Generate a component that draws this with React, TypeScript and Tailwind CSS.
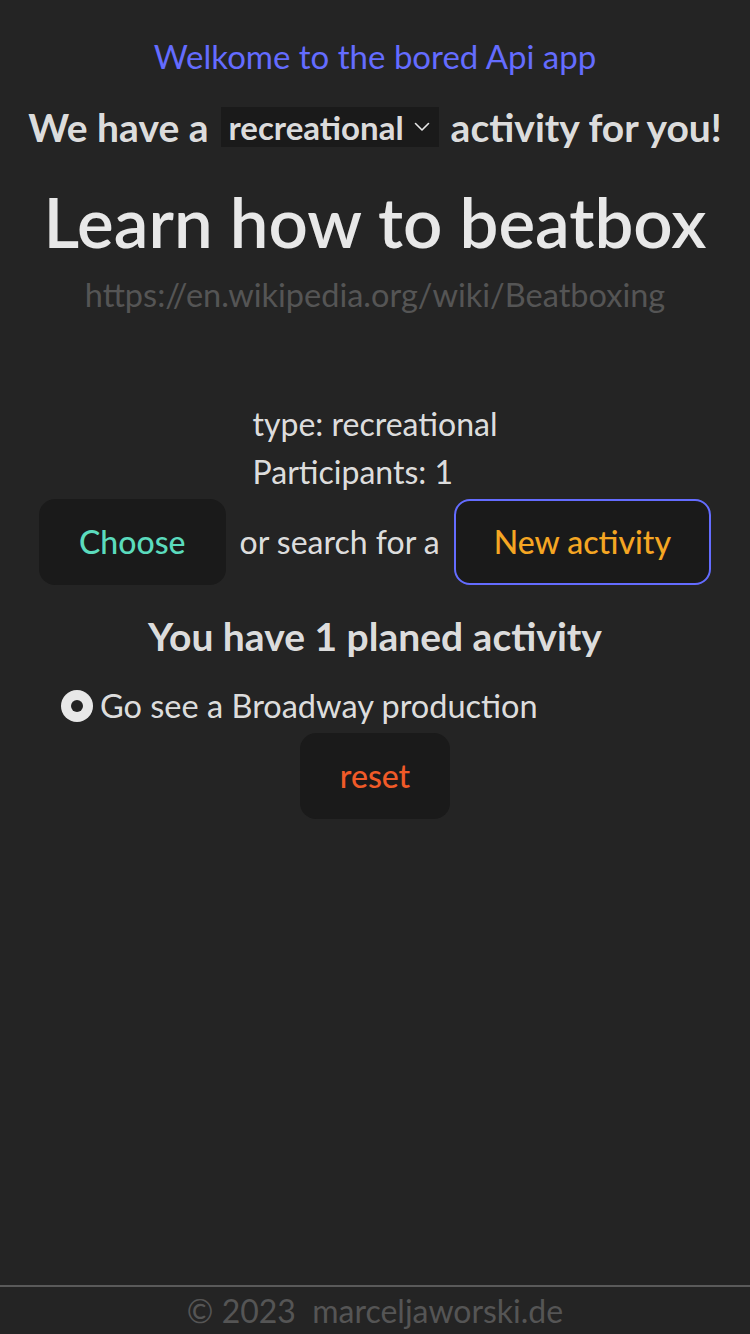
import { useState } from "react";

const activity = {
  activity: "Learn how to beatbox",
  link: "https://en.wikipedia.org/wiki/Beatboxing",
  type: "recreational",
  participants: 1,
};

const planned = ["Go see a Broadway production"];

function Chevron() {
  return (
    <svg width="16" height="10" viewBox="0 0 16 10" fill="none" className="ml-[10px]">
      <path d="M1.5 1.5 L8 8 L14.5 1.5" stroke="#e8e8e8" strokeWidth="1.6" strokeLinecap="round" strokeLinejoin="round" />
    </svg>
  );
}

function Radio() {
  return (
    <span className="flex h-[32px] w-[32px] shrink-0 items-center justify-center rounded-full bg-[#e8e8e8]">
      <span className="h-[12px] w-[12px] rounded-full bg-[#242424]" />
    </span>
  );
}

export default function App() {
  const [type] = useState(activity.type);

  return (
    <div className="flex min-h-screen flex-col bg-[#242424] font-['Lato',sans-serif] text-[rgba(255,255,255,0.87)]">
      <main className="flex flex-1 flex-col items-center text-center">
        <p className="mt-[32px] text-[33px] leading-[48px] text-[#646cff]">Welkome to the bored Api app</p>

        {/* type picker */}
        <h2 className="mt-[23px] flex items-center text-[39px] font-bold leading-[48px]">
          <span>We have a</span>
          <span className="mx-[12px] flex h-[40px] items-center bg-[#1a1a1a] pl-[8px] pr-[9px] text-[33px]">
            {type}
            <Chevron />
          </span>
          <span>activity for you!</span>
        </h2>

        <h1 className="mt-[31px] text-[69px] font-semibold leading-[80px] text-[#e8e8e8]">{activity.activity}</h1>
        <p className="mt-[9px] text-[32.5px] leading-[48px] text-[#555555]">{activity.link}</p>

        <div className="mt-[81px] text-left text-[32px] leading-[48px]">
          <p>type: {activity.type}</p>
          <p>Participants: {activity.participants}</p>
        </div>

        <div className="mt-[3px] flex items-center gap-[14px] text-[32px]">
          <button className="rounded-[16px] border-2 border-transparent bg-[#1a1a1a] px-[38px] py-[17px] font-medium leading-[48px] text-[#5bdbbd]">
            Choose
          </button>
          <span className="leading-[48px]">or search for a</span>
          <button className="rounded-[16px] border-2 border-[#646cff] bg-[#1a1a1a] px-[38px] py-[17px] font-medium leading-[48px] text-[#f5a623]">
            New activity
          </button>
        </div>

        <h3 className="mt-[27px] text-[39px] font-bold leading-[48px]">
          You have {planned.length} planed activity
        </h3>

        <ul className="mt-[22px] self-stretch pl-[61px] text-left text-[32.5px] leading-[48px]">
          {planned.map((p) => (
            <li key={p} className="flex items-center gap-[7px]">
              <Radio />
              <span>{p}</span>
            </li>
          ))}
        </ul>

        <button className="mt-[3px] rounded-[16px] border-2 border-transparent bg-[#1a1a1a] px-[38px] py-[17px] text-[32px] font-medium leading-[48px] text-[#f05a28]">
          reset
        </button>
      </main>

      <footer className="border-t-2 border-[#5a5a5a] text-center text-[32px] leading-[47px] text-[#555555]">
        © 2023&nbsp; marceljaworski.de
      </footer>
    </div>
  );
}
